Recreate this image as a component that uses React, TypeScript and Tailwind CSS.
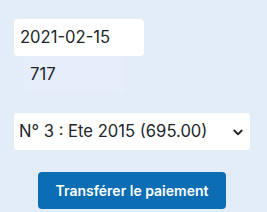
export default function App() {
  return (
    <div className="h-[212px] w-[267px] bg-[#e3edf7] font-['Inter',sans-serif] text-[#212529]">
      <div className="flex flex-col pt-[19px]">
        <div className="ml-[14px] flex h-[37px] w-[130px] items-center rounded-[4px] bg-white pl-[6px] text-[16.6px]">
          2021-02-15
        </div>
        <div className="ml-[24px] flex h-[36px] w-[100px] items-center rounded-b-[3px] bg-[#e6eefb] pl-[6px] text-[16.6px]">
          717
        </div>
        <div className="ml-[14px] mt-[21px] flex h-[37px] w-[236px] items-center justify-between rounded-[4px] bg-white pl-[5px] pr-[6px] text-[16.6px]">
          <span>N° 3 : Ete 2015 (695.00)</span>
          <svg width="12" height="12" viewBox="0 0 16 16" fill="none">
            <path d="M3 6l5 5 5-5" stroke="#212529" strokeWidth="2.4" strokeLinecap="round" strokeLinejoin="round" />
          </svg>
        </div>
        <div className="ml-[38px] mt-[22px] flex h-[37px] w-[188px] items-center justify-center rounded-[4px] bg-[#0b6db3] text-[14px] font-semibold text-white">
          Transférer le paiement
        </div>
      </div>
    </div>
  );
}
